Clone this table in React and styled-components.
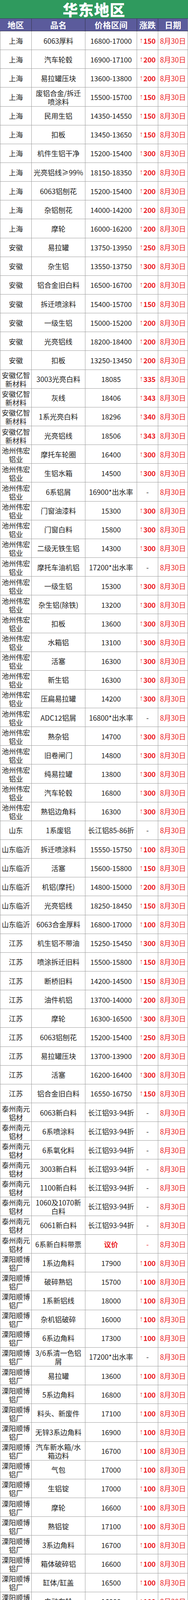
import React from "react";
import styled, { createGlobalStyle } from "styled-components";

const Global = createGlobalStyle`
  html, body { margin: 0; padding: 0; background: #fff; }
  body { font-family: "Noto Sans CJK SC", "Noto Sans", sans-serif; }
  * { box-sizing: border-box; }
`;

const RAW = `上海|6063厚料|16800-17000|150
上海|汽车轮毂|16900-17100|200
上海|易拉罐压块|13600-13800|200
上海|废铝合金/拆迁~喷涂料|15500-15700|150
上海|民用生铝|14350-14550|150
上海|扣板|13450-13650|150
上海|机件生铝干净|15200-15400|300
上海|光亮铝线≥99%|18150-18350|200
上海|6063铝刨花|15200-15400|200
上海|杂铝刨花|14000-14200|200
上海|摩轮|16000-16200|200
安徽|易拉罐|13750-13950|250
安徽|杂生铝|13550-13750|300
安徽|铝合金旧白料|16500-16700|200
安徽|拆迁喷涂料|15400-15700|150
安徽|一级生铝|15000-15200|200
安徽|光亮铝线|18200-18400|200
安徽|扣板|13250-13450|200
安徽亿智~新材料|3003光亮白料|18085|335
安徽亿智~新材料|灰线|18406|343
安徽亿智~新材料|1系光亮白料|18296|340
安徽亿智~新材料|光亮铝线|18506|343
池州伟宏~铝业|摩托车轮圈|16400|300
池州伟宏~铝业|生铝水箱|14500|300
池州伟宏~铝业|6系铝屑|16900*出水率|-
池州伟宏~铝业|门窗油漆料|15300|300
池州伟宏~铝业|门窗白料|15800|300
池州伟宏~铝业|二级无铁生铝|14300|300
池州伟宏~铝业|摩托车油机铝|17200*出水率|-
池州伟宏~铝业|一级生铝|15300|300
池州伟宏~铝业|杂生铝(除铁)|13200|300
池州伟宏~铝业|扣板|13600|300
池州伟宏~铝业|水箱铝|13100|300
池州伟宏~铝业|活塞|16300|300
池州伟宏~铝业|新生铝|16300|300
池州伟宏~铝业|压扁易拉罐|14200|300
池州伟宏~铝业|ADC12铝屑|16800*出水率|-
池州伟宏~铝业|熟杂铝|14700|300
池州伟宏~铝业|旧卷闸门|14800|300
池州伟宏~铝业|纯易拉罐|13800|300
池州伟宏~铝业|汽车轮毂|16800|300
池州伟宏~铝业|熟铝边角料|16300|300
山东|1系废铝|长江铝85-86折|-
山东临沂|拆迁喷涂料|15550-15750|100
山东临沂|活塞|15600-15800|150
山东临沂|机铝(摩托)|14800-15000|200
山东临沂|光亮铝线|18250-18450|150
山东临沂|6063合金厚料|16800-17000|100
江苏|机生铝不带油|15250-15450|300
江苏|喷涂拆迁旧料|15500-15800|150
江苏|断桥旧料|14200-14500|150
江苏|油件机铝|13700-14000|200
江苏|摩轮|16300-16500|300
江苏|6063铝刨花|15200-15400|250
江苏|易拉罐压块|13700-13900|200
江苏|活塞|16200-16400|300
江苏|铝合金旧白料|16550-16750|150
泰州南元~铝材|6063新白料|长江铝93-94折|-
泰州南元~铝材|6系喷涂料|长江铝93-94折|-
泰州南元~铝材|6系氧化料|长江铝93-94折|-
泰州南元~铝材|3003新白料|长江铝93-94折|-
泰州南元~铝材|1100新白料|长江铝93-94折|-
泰州南元~铝材|1060及1070新~白料|长江铝93-94折|-
泰州南元~铝材|6061新白料|长江铝93-94折|-
泰州南元~铝材|6系新白料带票|议价|--
溧阳顺博~铝厂|1系边角料|17900|100
溧阳顺博~铝厂|破碎熟铝|15700|100
溧阳顺博~铝厂|1系新铝线|18000|100
溧阳顺博~铝厂|杂机铝破碎|16000|100
溧阳顺博~铝厂|6系边角料|17300|100
溧阳顺博~铝厂|3/6系清一色铝~屑|17200*出水率|-
溧阳顺博~铝厂|易拉罐|13600|100
溧阳顺博~铝厂|5系边角料|16800|100
溧阳顺博~铝厂|料头、新废件|17100|100
溧阳顺博~铝厂|无锌3系边角料|16900|100
溧阳顺博~铝厂|汽车新水箱/水~箱边料|16700|100
溧阳顺博~铝厂|气包|17000|100
溧阳顺博~铝厂|生铝锭|17000|100
溧阳顺博~铝厂|摩轮|16600|100
溧阳顺博~铝厂|熟铝锭|17100|100
溧阳顺博~铝厂|3系边角料|16700|100
溧阳顺博~铝厂|箱体破碎铝|16600|100
溧阳顺博~铝厂|缸体/缸盖|16500|100
溧阳顺博~铝厂|电动车轮|16000|100
溧阳顺博~铝厂|ADC12铝泡|16500*出水率|-
溧阳顺博~铝厂|机铝|15500|100
溧阳顺博~铝厂|活塞|16500|100`;

const data = RAW.split("\n")
  .filter((l) => l.trim().length)
  .map((l) => {
    const [region = "", name = "", price = "", change = ""] = l.split("|");
    const fix = (s) => s.replace(/~/g, "\n");
    return { region: fix(region), name: fix(name), price, change };
  });

const COLS = "81px 137px 132px 54px 76px";
const RED = "#ec1c24";

const Page = styled.div`
  width: 480px;
  background: #fff;
`;

const Title = styled.div`
  height: 47.5px;
  background: #2f9a5e;
  color: #fff;
  font-family: "Noto Sans CJK SC", sans-serif;
  font-weight: 900;
  font-size: 39px;
  letter-spacing: 1px;
  display: flex;
  align-items: center;
  justify-content: center;
  line-height: 1;
  padding-top: 1px;
  border-bottom: 1px solid #3a3a5a;
`;

const HeadRow = styled.div`
  display: grid;
  grid-template-columns: ${COLS};
  height: 32.5px;
  background: #5b5b9c;
  border-bottom: 1px solid #2f2f45;
`;

const HeadCell = styled.div`
  color: #fff;
  font-weight: 700;
  font-size: 21px;
  display: flex;
  align-items: center;
  justify-content: center;
  border-right: 1px solid #34344e;
  &:last-child { border-right: 1px solid #8a8a9a; }
  line-height: 1;
`;

const Row = styled.div`
  display: grid;
  grid-template-columns: ${COLS};
  height: 48.149px;
  border-bottom: 1px solid #9e9e9e;
`;

const Cell = styled.div`
  display: flex;
  align-items: center;
  justify-content: center;
  text-align: center;
  white-space: pre-line;
  font-size: 18px;
  line-height: ${(p) => (p.$multi ? "22px" : "24px")};
  color: ${(p) => (p.$red ? RED : "#1c1c1c")};
  font-weight: ${(p) => (p.$bold ? 700 : 400)};
  border-right: 1px solid #9e9e9e;
  &:first-child { border-left: 1px solid #9e9e9e; }
  padding-top: ${(p) => (p.$multi ? "2px" : "0")};
`;

const Change = styled.div`
  display: flex;
  align-items: center;
  justify-content: center;
  font-size: 18px;
  line-height: 24px;
  color: ${(p) => (p.$red ? RED : "#1c1c1c")};
  font-weight: 700;
  border-right: 1px solid #9e9e9e;
  letter-spacing: -0.2px;
`;

const Arrow = styled.span`
  font-family: "Liberation Sans", sans-serif;
  font-weight: 400;
  font-size: 19px;
  margin-right: 1px;
  transform: scaleX(0.8);
  display: inline-block;
`;

const Dash = styled.span`
  font-weight: 400;
`;

export default function App() {
  return (
    <Page>
      <Global />
      <Title>华东地区</Title>
      <HeadRow>
        <HeadCell>地区</HeadCell>
        <HeadCell>品名</HeadCell>
        <HeadCell>价格区间</HeadCell>
        <HeadCell>涨跌</HeadCell>
        <HeadCell>日期</HeadCell>
      </HeadRow>
      {data.map((r, i) => {
        const special = r.change === "--";
        const isDash = r.change === "-" || special;
        return (
          <Row key={i}>
            <Cell $multi={r.region.includes("\n")}>{r.region}</Cell>
            <Cell $multi={r.name.includes("\n")}>{r.name}</Cell>
            <Cell $red={special} $bold={special}>
              {r.price}
            </Cell>
            <Change $red={!isDash || special}>
              {isDash ? (
                <Dash>-</Dash>
              ) : (
                <>
                  <Arrow>↑</Arrow>
                  {r.change}
                </>
              )}
            </Change>
            <Cell $red>8月30日</Cell>
          </Row>
        );
      })}
    </Page>
  );
}
